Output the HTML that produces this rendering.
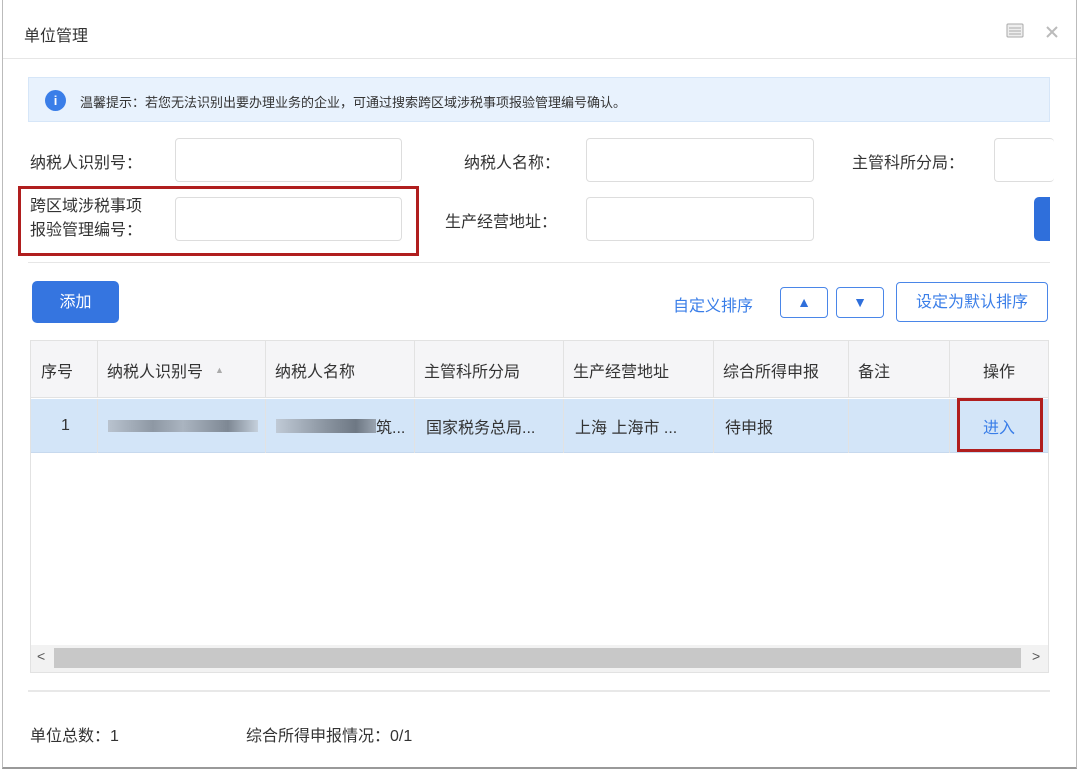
<!DOCTYPE html>
<html><head><meta charset="utf-8"><style>
*{box-sizing:border-box;margin:0;padding:0}
body{width:1080px;height:771px;background:#fff;font-family:"Liberation Sans","Noto Sans CJK SC",sans-serif;color:#333;position:relative;overflow:hidden}
.a{position:absolute}
.inp{position:absolute;border:1px solid #ddd;border-radius:4px;background:#fff}
.lbl{position:absolute;font-size:16px;color:#333}
.th,.td{position:absolute;font-size:16px;display:flex;align-items:center;border-right:1px solid #e2e2e2}
</style></head><body>
<div class="a" style="left:2px;top:0;width:1075px;height:769px;border:1px solid #bbb;border-top:none;border-bottom:2px solid #999"></div>
<div class="a" style="left:24px;top:22px;font-size:16px;color:#333">单位管理</div>
<svg class="a" style="left:1006px;top:23px" width="18" height="16"><rect x="1" y="1" width="16" height="13" rx="1" fill="#eee" stroke="#aaa"/><line x1="3" y1="5" x2="15" y2="5" stroke="#aaa"/><line x1="3" y1="8" x2="15" y2="8" stroke="#aaa"/><line x1="3" y1="11" x2="15" y2="11" stroke="#aaa"/></svg>
<svg class="a" style="left:1045px;top:25px" width="14" height="14"><path d="M2 2L12 12M12 2L2 12" stroke="#bbb" stroke-width="2"/></svg>
<div class="a" style="left:3px;top:58px;width:1073px;height:1px;background:#e6e6e6"></div>
<div class="a" style="left:28px;top:77px;width:1022px;height:45px;background:#e8f2fd;border:1px solid #d6e6f8"></div>
<div class="a" style="left:45px;top:90px;width:21px;height:21px;border-radius:50%;background:#3a7ee8;color:#fff;font-size:13px;text-align:center;line-height:21px;font-weight:bold">i</div>
<div class="a" style="left:80px;top:92px;font-size:13px;color:#333">温馨提示：若您无法识别出要办理业务的企业，可通过搜索跨区域涉税事项报验管理编号确认。</div>
<div class="lbl" style="left:30px;top:149px">纳税人识别号：</div>
<div class="inp" style="left:175px;top:138px;width:227px;height:44px"></div>
<div class="lbl" style="left:464px;top:149px">纳税人名称：</div>
<div class="inp" style="left:586px;top:138px;width:228px;height:44px"></div>
<div class="lbl" style="left:852px;top:149px">主管科所分局：</div>
<div class="inp" style="left:994px;top:138px;width:60px;height:44px;border-right:none"></div>
<div class="lbl" style="left:30px;top:195px;line-height:24px">跨区域涉税事项<br>报验管理编号：</div>
<div class="inp" style="left:175px;top:197px;width:227px;height:44px"></div>
<div class="lbl" style="left:445px;top:208px">生产经营地址：</div>
<div class="inp" style="left:586px;top:197px;width:228px;height:44px"></div>
<div class="a" style="left:1034px;top:197px;width:16px;height:44px;background:#2f6fdb;border-radius:5px 0 0 5px"></div>
<div class="a" style="left:18px;top:186px;width:401px;height:70px;border:3px solid #b01e1e"></div>
<div class="a" style="left:28px;top:262px;width:1022px;height:1px;background:#e6e6e6"></div>
<div class="a" style="left:32px;top:281px;width:87px;height:42px;background:#3575e0;border-radius:5px;color:#fff;font-size:16px;text-align:center;line-height:44px">添加</div>
<div class="a" style="left:673px;top:292px;font-size:16px;color:#3a7ee8">自定义排序</div>
<div class="a" style="left:780px;top:287px;width:48px;height:31px;border:1px solid #4a86e8;border-radius:4px;color:#2f6fdb;text-align:center;line-height:29px;font-size:14px">▲</div>
<div class="a" style="left:836px;top:287px;width:48px;height:31px;border:1px solid #4a86e8;border-radius:4px;color:#2f6fdb;text-align:center;line-height:29px;font-size:14px">▼</div>
<div class="a" style="left:896px;top:282px;width:152px;height:40px;border:1px solid #4a86e8;border-radius:4px;color:#3a7ee8;text-align:center;line-height:40px;font-size:16px">设定为默认排序</div>
<div class="a" style="left:30px;top:340px;width:1019px;height:333px;border:1px solid #e2e2e2"></div>
<div class="a" style="left:31px;top:341px;width:1017px;height:57px;background:#f5f5f7;border-bottom:1px solid #e2e2e2"></div>
<div class="a" style="left:31px;top:399px;width:1017px;height:54px;background:#d3e5f8;border-bottom:1px solid #c7d9ee"></div>
<div class="th" style="left:31px;top:341px;width:67px;height:57px;padding-left:10px">序号</div>
<div class="th" style="left:98px;top:341px;width:168px;height:57px;padding-left:9px">纳税人识别号 <span style="font-size:9px;color:#aaa;margin-left:12px">▲</span></div>
<div class="th" style="left:266px;top:341px;width:149px;height:57px;padding-left:9px">纳税人名称</div>
<div class="th" style="left:415px;top:341px;width:149px;height:57px;padding-left:9px">主管科所分局</div>
<div class="th" style="left:564px;top:341px;width:150px;height:57px;padding-left:9px">生产经营地址</div>
<div class="th" style="left:714px;top:341px;width:135px;height:57px;padding-left:9px">综合所得申报</div>
<div class="th" style="left:849px;top:341px;width:101px;height:57px;padding-left:9px">备注</div>
<div class="th" style="left:950px;top:341px;width:98px;height:57px;justify-content:center;border-right:none">操作</div>
<div class="td" style="left:31px;top:399px;width:67px;height:54px;padding-left:30px">1</div>
<div class="td" style="left:98px;top:399px;width:168px;height:54px"><div style="margin-left:10px;width:150px;height:12px;background:linear-gradient(90deg,#b9c3cf,#8e98a4 30%,#aab4c0 50%,#7e8894 80%,#c5d0dc)"></div></div>
<div class="td" style="left:266px;top:399px;width:149px;height:54px;padding-left:10px"><div style="width:100px;height:14px;background:linear-gradient(90deg,#c0cad6,#8a94a0 50%,#6e7884 80%,#9aa4b0)"></div>筑...</div>
<div class="td" style="left:415px;top:399px;width:149px;height:54px;padding-left:11px">国家税务总局...</div>
<div class="td" style="left:564px;top:399px;width:150px;height:54px;padding-left:11px">上海 上海市 ...</div>
<div class="td" style="left:714px;top:399px;width:135px;height:54px;padding-left:11px">待申报</div>
<div class="td" style="left:849px;top:399px;width:101px;height:54px"></div>
<div class="td" style="left:950px;top:399px;width:98px;height:54px;justify-content:center;color:#3a7ee8;border-right:none">进入</div>
<div class="a" style="left:957px;top:398px;width:86px;height:54px;border:3px solid #b01e1e"></div>
<div class="a" style="left:31px;top:645px;width:1017px;height:27px;background:#f2f2f2"></div>
<div class="a" style="left:54px;top:648px;width:967px;height:20px;background:#c8c8c8"></div>
<div class="a" style="left:37px;top:648px;font-size:14px;color:#555">&lt;</div>
<div class="a" style="left:1032px;top:648px;font-size:14px;color:#555">&gt;</div>
<div class="a" style="left:28px;top:690px;width:1022px;height:2px;background:#e8e8e8"></div>
<div class="a" style="left:30px;top:722px;font-size:16px">单位总数：1</div>
<div class="a" style="left:246px;top:722px;font-size:16px">综合所得申报情况：0/1</div>
</body></html>
